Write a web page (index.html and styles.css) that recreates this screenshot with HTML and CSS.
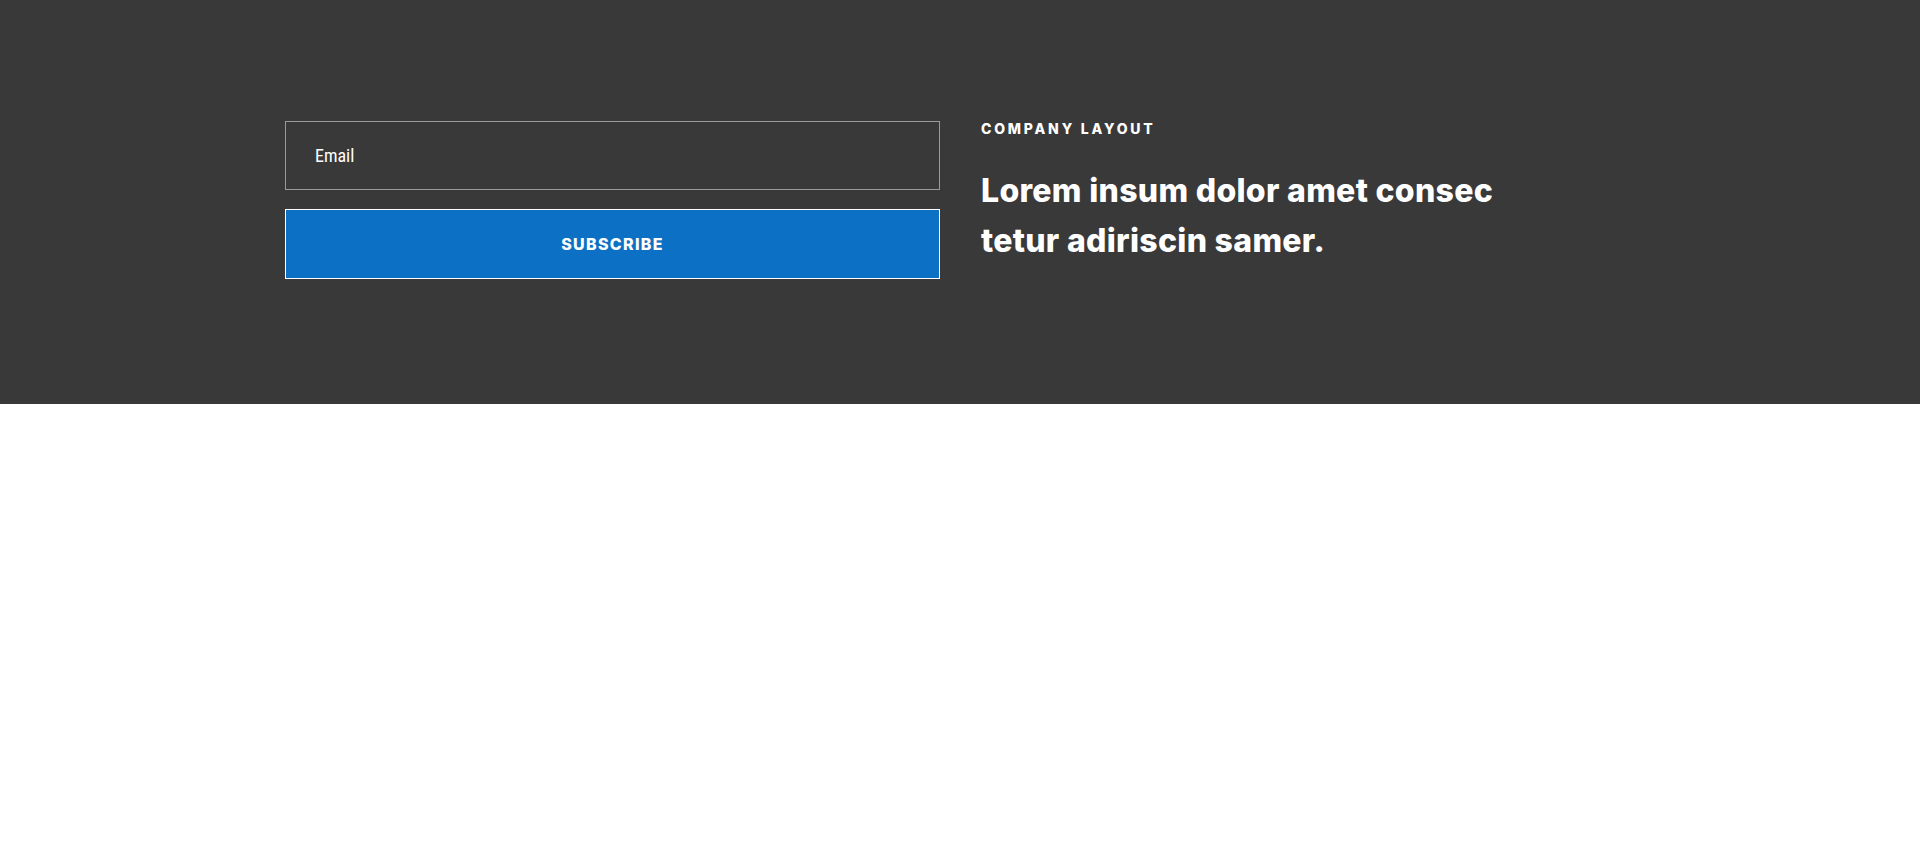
FILE: index.html
```html
<!DOCTYPE html>
<html lang="en">
<head>
    <meta charset="UTF-8">
    <meta name="viewport" content="width=device-width, initial-scale=1.0">
    <title>Company Layout - Newsletter</title>
    <link rel="stylesheet" href="styles.css">
</head>
<body>
    <section class="newsletter">
        <div class="newsletter-inner">
            <form class="subscribe-form" onsubmit="return false;">
                <input type="email" class="email-input" placeholder="Email">
                <button type="submit" class="subscribe-btn">Subscribe</button>
            </form>
            <div class="newsletter-text">
                <h6 class="eyebrow">Company Layout</h6>
                <h2 class="headline">Lorem insum dolor amet consec tetur adiriscin samer.</h2>
            </div>
        </div>
    </section>
</body>
</html>
```

FILE: styles.css
```css
* {
    margin: 0;
    padding: 0;
    box-sizing: border-box;
}

body {
    font-family: Inter, 'Noto Sans', sans-serif;
    background-color: #fff;
    color: #fff;
}

.newsletter {
    background-color: #393939;
    height: 404px;
    padding-top: 121px;
}

.newsletter-inner {
    width: 1350px;
    margin: 0 auto;
    display: grid;
    grid-template-columns: 655px 1fr;
    gap: 41px;
}

.subscribe-form {
    display: flex;
    flex-direction: column;
    gap: 19px;
}

.email-input {
    height: 69px;
    padding: 0 29px;
    background: transparent;
    border: 1px solid #9a9a9a;
    border-radius: 0;
    color: #fff;
    font-family: 'Roboto Condensed', 'Liberation Sans Narrow', Roboto, sans-serif;
    font-size: 18px;
    outline: none;
}

.email-input::placeholder {
    color: #fff;
    opacity: 1;
}

.subscribe-btn {
    height: 70px;
    background-color: #0c70c4;
    border: 1px solid #fff;
    color: #fff;
    font-family: Inter, 'Noto Sans', sans-serif;
    font-size: 16px;
    font-weight: 800;
    letter-spacing: 1.3px;
    text-transform: uppercase;
    cursor: pointer;
}

.eyebrow {
    font-size: 14px;
    font-weight: 800;
    letter-spacing: 2.8px;
    text-transform: uppercase;
    line-height: 16px;
}

.headline {
    margin-top: 29px;
    width: 570px;
    font-size: 32px;
    font-weight: 800;
    letter-spacing: 0.3px;
    line-height: 50px;
}
```
